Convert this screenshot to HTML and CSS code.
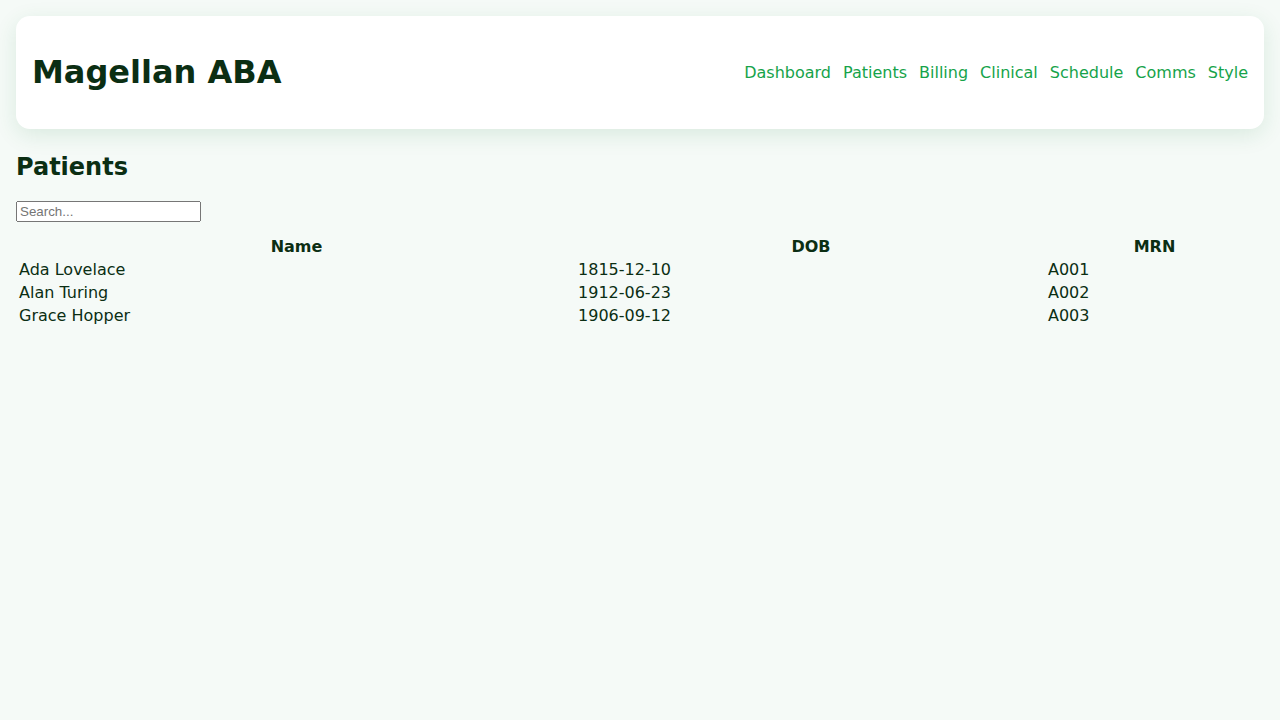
FILE: index.html
```html
<!DOCTYPE html>
<html lang="en">
<head>
<meta charset="utf-8">
<title>Magellan ABA</title>
<link rel="stylesheet" href="styles.css">
</head>
<body>
<header class="topbar">
  <h1 class="brand">Magellan ABA</h1>
  <nav class="nav">
    <a href="#">Dashboard</a>
    <a href="#">Patients</a>
    <a href="#">Billing</a>
    <a href="#">Clinical</a>
    <a href="#">Schedule</a>
    <a href="#">Comms</a>
    <a href="#">Style</a>
  </nav>
</header>
<main class="content">
  <h2 class="page-title">Patients</h2>
  <div class="search-row"><input class="search" type="text" placeholder="Search..."></div>
  <table class="patients">
    <thead>
      <tr><th>Name</th><th>DOB</th><th>MRN</th></tr>
    </thead>
    <tbody>
      <tr><td>Ada Lovelace</td><td>1815-12-10</td><td>A001</td></tr>
      <tr><td>Alan Turing</td><td>1912-06-23</td><td>A002</td></tr>
      <tr><td>Grace Hopper</td><td>1906-09-12</td><td>A003</td></tr>
    </tbody>
  </table>
</main>
</body>
</html>
```
FILE: styles.css
```css
html, body {
  background: #f5faf7;
}
body {
  margin: 0;
  padding: 16px;
  font-family: "DejaVu Sans", sans-serif;
  font-size: 16px;
  color: #0b2e13;
}
.topbar {
  display: flex;
  justify-content: space-between;
  align-items: center;
  background: #ffffff;
  border-radius: 14px;
  padding: 16px;
  box-shadow: 0 6px 22px rgba(22, 120, 60, 0.12);
  margin-bottom: 24px;
}
.brand {
  font-size: 32px;
  margin: 21.44px 0;
  color: #0b2e13;
}
.nav {
  display: flex;
  gap: 12px;
}
.nav a {
  color: #16a34a;
  text-decoration: none;
}
.page-title {
  font-size: 24px;
  margin: 0 0 20px;
  color: #0b2e13;
}
.search-row {
  margin-bottom: 12px;
}
.search {
  width: 185px;
  box-sizing: border-box;
}
.patients {
  width: 100%;
  color: #0b2e13;
}
.patients th, .patients td {
  padding: 1px;
}
.patients td {
  text-align: left;
}
```
